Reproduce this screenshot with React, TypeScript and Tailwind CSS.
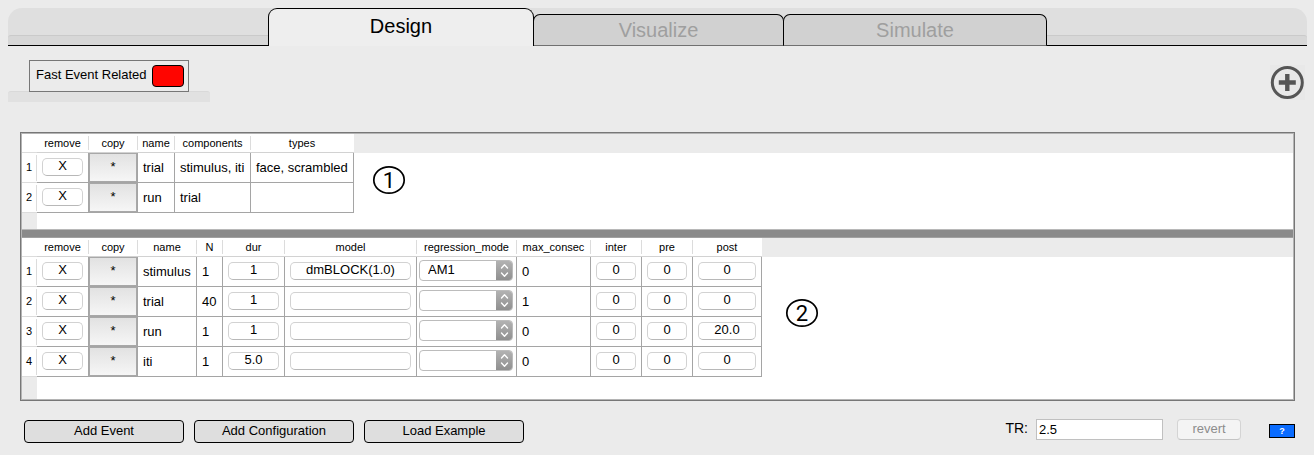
import React from "react";

type Column = { label: string; width: number };

type CellProps = { children?: React.ReactNode; className?: string };

const eventColumns: Column[] = [
  { label: "remove", width: 52 },
  { label: "copy", width: 49 },
  { label: "name", width: 37 },
  { label: "components", width: 76 },
  { label: "types", width: 103 },
];

const configColumns: Column[] = [
  { label: "remove", width: 52 },
  { label: "copy", width: 49 },
  { label: "name", width: 59 },
  { label: "N", width: 26 },
  { label: "dur", width: 62 },
  { label: "model", width: 132 },
  { label: "regression_mode", width: 100 },
  { label: "max_consec", width: 74 },
  { label: "inter", width: 51 },
  { label: "pre", width: 51 },
  { label: "post", width: 69 },
];

const events = [
  { name: "trial", components: "stimulus, iti", types: "face, scrambled" },
  { name: "run", components: "trial", types: "" },
];

const configs = [
  { name: "stimulus", n: "1", dur: "1", model: "dmBLOCK(1.0)", mode: "AM1", max: "0", inter: "0", pre: "0", post: "0" },
  { name: "trial", n: "40", dur: "1", model: "", mode: "", max: "1", inter: "0", pre: "0", post: "0" },
  { name: "run", n: "1", dur: "1", model: "", mode: "", max: "0", inter: "0", pre: "0", post: "20.0" },
  { name: "iti", n: "1", dur: "5.0", model: "", mode: "", max: "0", inter: "0", pre: "0", post: "0" },
];

function Cell({ children, className = "px-[5px]" }: CellProps) {
  return (
    <td className={`h-[30px] whitespace-nowrap border-r border-b border-[#a5a5a5] p-0 align-middle leading-[18px] ${className}`}>
      {children}
    </td>
  );
}

function ValueButton({ label, children }: { label: string; children?: string }) {
  return (
    <button
      type="button"
      aria-label={label}
      className="-mt-px block h-[18px] w-full rounded-[5px] border border-[#d2d2d2] border-b-[#b8b8b8] bg-white pb-[2px] text-center leading-[14px]"
    >
      {children}
    </button>
  );
}

function RowStart({ index, name }: { index: number; name: string }) {
  return (
    <>
      <th scope="row" className="h-[30px] border-b border-[#dcdcdc] bg-white p-0 text-[11px] font-normal">
        <div className="flex h-[26px] items-center justify-center border-r border-[#dcdcdc]">{index}</div>
      </th>
      <Cell>
        <ValueButton label={`Remove ${name}`}>X</ValueButton>
      </Cell>
      <Cell className="">
        <button
          type="button"
          aria-label={`Copy ${name}`}
          className="block h-[29px] w-full border border-[#a8a8a8] bg-linear-to-b from-[#e2e2e2] to-[#f6f6f6] pb-[2px] text-center leading-[24px]"
        >
          *
        </button>
      </Cell>
      <Cell>{name}</Cell>
    </>
  );
}

function ModeSelect({ value, label }: { value: string; label: string }) {
  return (
    <div className="relative -mt-[2px] h-[21px] overflow-hidden rounded-[4px] border border-[#bcbcbc] bg-white">
      <select
        aria-label={label}
        defaultValue={value}
        className="block h-full w-full appearance-none bg-transparent pb-[2px] pl-2 leading-[17px] outline-none"
      >
        <option value=""></option>
        <option value="AM1">AM1</option>
      </select>
      <span className="pointer-events-none absolute -inset-y-px -right-px flex w-[17px] items-center justify-center bg-linear-to-b from-[#b4b4b4] to-[#8e8e8e]">
        <svg width="9" height="15" viewBox="0 0 9 15" fill="none" stroke="#fff" strokeWidth="1.4" strokeLinecap="round" strokeLinejoin="round">
          <path d="M1.5 5 4.5 1.8 7.5 5M1.5 10 4.5 13.2 7.5 10" />
        </svg>
      </span>
    </div>
  );
}

function Pane({
  columns,
  label,
  marker,
  markerClass,
  fillerClass,
  children,
}: {
  columns: Column[];
  label: string;
  marker: string;
  markerClass: string;
  fillerClass: string;
  children: React.ReactNode;
}) {
  return (
    <section className="flex bg-white" aria-label={label}>
      <div className="shrink-0">
        <table className="table-fixed border-separate border-spacing-0">
          <colgroup>
            <col style={{ width: 15 }} />
            {columns.map((c) => (
              <col key={c.label} style={{ width: c.width }} />
            ))}
          </colgroup>
          <thead>
            <tr>
              <td className="h-[19px] border-b border-[#dcdcdc] p-0"></td>
              {columns.map((c, i) => (
                <th key={c.label} scope="col" className="h-[19px] border-b border-[#d2d2d2] p-0 text-[11px] font-normal">
                  <div
                    className={`flex h-[14px] items-center justify-center border-r leading-[14px] ${
                      i === columns.length - 1 ? "border-transparent" : "border-[#dcdcdc]"
                    }`}
                  >
                    {c.label}
                  </div>
                </th>
              ))}
            </tr>
          </thead>
          <tbody>{children}</tbody>
        </table>
        <div className={`w-[15px] bg-[#ebebeb] ${fillerClass}`} />
      </div>
      <div className="flex-1">
        <div className="h-[19px] bg-[#ebebeb]" />
        <div className={markerClass}>
          <svg width="34" height="30" viewBox="0 0 34 30" role="img" aria-label={`Area ${marker}`}>
            <ellipse cx="17" cy="15" rx="15.2" ry="13.2" fill="none" stroke="#000" strokeWidth="1.7" />
            <text x="17" y="23" textAnchor="middle" fontSize="22" className="font-['Roboto',sans-serif]">
              {marker}
            </text>
          </svg>
        </div>
      </div>
    </section>
  );
}

function ActionButton({ children }: { children: string }) {
  return (
    <button
      type="button"
      className="h-[23px] w-40 rounded-[4px] border border-black bg-[#dedede] pb-[2px] text-center leading-[19px]"
    >
      {children}
    </button>
  );
}

export default function App() {
  return (
    <div className="min-h-screen bg-[#ebebeb] font-['Liberation_Sans',Arial,sans-serif] text-[13px] text-black">
      <header className="pt-2 pr-[7px] pl-2">
        <div
          role="tablist"
          className="flex h-[38px] items-end rounded-t-[14px] bg-[#dfdfdf] text-[20px]"
        >
          <div className="h-[11px] flex-1 rounded-tl-[3px] border-t border-b border-t-[#cacaca] border-b-black bg-[#d7d7d7]" />
          <button
            type="button"
            role="tab"
            aria-selected="true"
            className="z-10 h-[38px] w-[266px] rounded-t-[9px] border border-b-0 border-black bg-[#eeeeee] pb-[3px]"
          >
            Design
          </button>
          <button
            type="button"
            role="tab"
            aria-selected="false"
            className="-ml-px h-8 w-[251px] rounded-t-[7px] border border-black border-b-[#707070] bg-[#d1d1d1] pb-[3px] text-[#9f9f9f]"
          >
            Visualize
          </button>
          <button
            type="button"
            role="tab"
            aria-selected="false"
            className="-ml-px h-8 w-[264px] rounded-t-[7px] border border-black border-b-[#707070] bg-[#d1d1d1] pb-[3px] text-[#9f9f9f]"
          >
            Simulate
          </button>
          <div className="h-[11px] flex-1 rounded-tr-[3px] border-t border-b border-t-[#cacaca] border-b-black bg-[#d7d7d7]" />
        </div>
      </header>

      <div className="flex items-start justify-between pr-[9px] pl-2">
        <div className="pt-[14px]">
          <div className="relative z-10 ml-[21px] flex h-8 w-40 items-center justify-between border border-[#777] bg-[#ebebeb] pr-1 pl-[6px]">
            <label htmlFor="fast-event" className="-mt-[2px]">Fast Event Related</label>
            <button
              id="fast-event"
              type="button"
              aria-label="Fast Event Related"
              className="h-[22px] w-8 rounded-[4px] border border-black bg-[#ff0500]"
            />
          </div>
          <div className="-mt-px h-[11px] w-[202px] rounded-t-[3px] border-t border-[#d9d9d9] bg-[#e1e1e1]" />
        </div>
        <button type="button" aria-label="Add" className="mt-[19px] h-[35px] w-[35px] bg-[#e8e8e8]">
          <svg width="35" height="35" viewBox="0 0 35 35" fill="none" stroke="#555">
            <circle cx="17.3" cy="17.5" r="15" strokeWidth="3" />
            <path d="M17.3 9v17M8.8 17.5h17" strokeWidth="4.4" />
          </svg>
        </button>
      </div>

      <main className="mt-[30px] mr-[19px] ml-5 border border-[#777]">
        <div className="border border-[#b4b4b4]">
          <Pane
            columns={eventColumns}
            label="Events"
            marker="1"
            markerClass="mt-[12px] ml-[18px]"
            fillerClass="h-4"
          >
            {events.map((e, i) => (
              <tr key={e.name}>
                <RowStart index={i + 1} name={e.name} />
                <Cell>{e.components}</Cell>
                <Cell>{e.types}</Cell>
              </tr>
            ))}
          </Pane>
          <div role="separator" className="h-[9px] border-t border-b border-t-[#b8b8b8] border-b-[#a0a0a0] bg-[#8a8a8a]" />
          <Pane
            columns={configColumns}
            label="Configurations"
            marker="2"
            markerClass="mt-[41px] ml-[23px]"
            fillerClass="h-[22px]"
          >
            {configs.map((c, i) => (
              <tr key={c.name}>
                <RowStart index={i + 1} name={c.name} />
                <Cell>{c.n}</Cell>
                <Cell>
                  <ValueButton label={`${c.name} dur ${c.dur}`}>{c.dur}</ValueButton>
                </Cell>
                <Cell>
                  <ValueButton label={`${c.name} model ${c.model}`}>{c.model}</ValueButton>
                </Cell>
                <Cell className="pr-[3px] pl-[2px]">
                  <ModeSelect value={c.mode} label={`${c.name} regression_mode`} />
                </Cell>
                <Cell>{c.max}</Cell>
                <Cell>
                  <ValueButton label={`${c.name} inter ${c.inter}`}>{c.inter}</ValueButton>
                </Cell>
                <Cell>
                  <ValueButton label={`${c.name} pre ${c.pre}`}>{c.pre}</ValueButton>
                </Cell>
                <Cell>
                  <ValueButton label={`${c.name} post ${c.post}`}>{c.post}</ValueButton>
                </Cell>
              </tr>
            ))}
          </Pane>
        </div>
      </main>

      <footer className="mt-[18px] mr-[19px] ml-6 flex items-start justify-between">
        <div className="flex gap-[10px] pt-px">
          <ActionButton>Add Event</ActionButton>
          <ActionButton>Add Configuration</ActionButton>
          <ActionButton>Load Example</ActionButton>
        </div>
        <div className="flex items-start">
          <label htmlFor="tr" className="mr-2 text-[14px] leading-[18px]">TR:</label>
          <input
            id="tr"
            type="text"
            defaultValue="2.5"
            className="h-[21px] w-[127px] rounded-none border border-[#c0c0c0] bg-white pl-[2px] leading-[18px] outline-none"
          />
          <button
            type="button"
            disabled
            className="ml-[14px] h-[21px] w-16 rounded-[4px] border border-[#d4d4d4] border-b-[#c4c4c4] bg-[#f4f4f4] pb-[2px] leading-[17px] text-[#8c8c8c]"
          >
            revert
          </button>
          <button
            type="button"
            className="mt-[5px] ml-7 h-[14px] w-[26px] border border-black bg-[#0a6cff] text-center text-[9px] leading-[12px] font-bold text-white"
          >
            ?
          </button>
        </div>
      </footer>
    </div>
  );
}
